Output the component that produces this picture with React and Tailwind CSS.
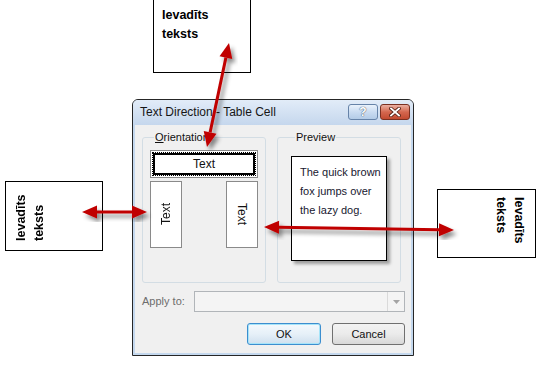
import React from "react";

const ui = { fontFamily: '"Liberation Sans", Arial, sans-serif' };

function Arrow({ x1, y1, x2, y2 }) {
  const len = Math.hypot(x2 - x1, y2 - y1);
  const ux = (x2 - x1) / len;
  const uy = (y2 - y1) / len;
  const px = -uy;
  const py = ux;
  const head = 15;
  const half = 6.5;
  const b1 = [x1 + ux * head, y1 + uy * head];
  const b2 = [x2 - ux * head, y2 - uy * head];
  const tri = (tx, ty, bx, by) =>
    `${tx},${ty} ${bx + px * half},${by + py * half} ${bx - px * half},${by - py * half}`;

  return (
    <g filter="url(#arrowShadow)">
      <line x1={b1[0]} y1={b1[1]} x2={b2[0]} y2={b2[1]} stroke="#c00000" strokeWidth="3" />
      <polygon points={tri(x1, y1, b1[0], b1[1])} fill="#c00000" />
      <polygon points={tri(x2, y2, b2[0], b2[1])} fill="#c00000" />
    </g>
  );
}

function Note({ className, children }) {
  return (
    <div
      className={`absolute border border-black bg-white text-[12.5px] font-bold leading-[18px] text-black ${className}`}
      style={ui}
    >
      {children}
    </div>
  );
}

export default function App() {
  return (
    <div className="relative w-[538px] h-[365px] overflow-hidden bg-white" style={ui}>
      {/* notes around the dialog */}
      <Note className="left-[153px] -top-[1px] w-[98px] h-[74px] pl-[8px] pt-[6px] leading-[19px]">
        <div>Ievadīts</div>
        <div>teksts</div>
      </Note>

      <Note className="left-[5px] top-[181px] w-[98px] h-[70px]">
        <div className="w-full h-full [writing-mode:vertical-rl] rotate-180 pt-[9px] pr-[6px]">
          <div>Ievadīts</div>
          <div>teksts</div>
        </div>
      </Note>

      <Note className="left-[437px] top-[189px] w-[99px] h-[69px]">
        <div className="w-full h-full [writing-mode:vertical-rl] pt-[7px] pr-[7px]">
          <div>Ievadīts</div>
          <div>teksts</div>
        </div>
      </Note>

      {/* dialog */}
      <div className="absolute left-[132px] top-[99px] w-[282px] h-[257px] flex flex-col rounded-t-[6px] border border-[#262626] bg-[#c4d8ee] overflow-hidden">
        <div className="h-[25px] shrink-0 flex items-start pl-[7px] pr-[3px] bg-linear-to-b from-[#e2ecf8] to-[#c5d7ed]">
          <span className="mt-[5px] text-[12px] leading-[14px] text-[#161616]">Text Direction - Table Cell</span>
          <div className="ml-auto mt-[4px] flex gap-[2px]">
            <div className="w-[30px] h-[16px] rounded-[3px] border border-[#6683a8] bg-linear-to-b from-[#eaf2fb] via-[#cadcf1] to-[#b3cbe7] flex items-center justify-center">
              <span
                className="text-[12px] font-bold leading-[12px] text-white"
                style={{ textShadow: "0 0 1px #44546b, 0 0 1px #44546b" }}
              >
                ?
              </span>
            </div>
            <div className="w-[30px] h-[16px] rounded-[3px] border border-[#7a3021] bg-linear-to-b from-[#eab0a2] via-[#d4674f] to-[#c24a30] flex items-center justify-center">
              <svg width="12" height="10" viewBox="0 0 12 10">
                <path d="M2 1.5 L10 8.5 M10 1.5 L2 8.5" stroke="#5b2419" strokeWidth="3.6" strokeLinecap="square" />
                <path d="M2 1.5 L10 8.5 M10 1.5 L2 8.5" stroke="#ffffff" strokeWidth="1.8" strokeLinecap="square" />
              </svg>
            </div>
          </div>
        </div>

        <div className="flex-1 mx-[2px] mb-[2px] bg-[#f0f0f0] pl-[7px] pr-[6px] pt-[5px] flex flex-col text-[11px] text-[#111]">
          <div className="flex gap-[11px]">
            <fieldset className="w-[124px] h-[153px] border border-[#d3dde4] rounded-[3px] pl-[7px]">
              <legend className="ml-[4px] px-[1px] leading-[14px]">
                <span className="underline">O</span>rientation
              </legend>
              <div className="mt-[6px] w-[108px] h-[28px] border border-[#8a8a8a] bg-white p-[1px]">
                <div className="h-full border border-dotted border-black">
                  <div className="h-full border-2 border-black bg-white flex items-center justify-center text-[12px]">
                    Text
                  </div>
                </div>
              </div>
              <div className="mt-[3px] w-[108px] flex justify-between">
                <div className="w-[32px] h-[67px] border border-[#8a8a8a] bg-white flex items-center justify-center text-[12px]">
                  <span className="inline-block [writing-mode:vertical-rl] rotate-180">Text</span>
                </div>
                <div className="w-[32px] h-[67px] border border-[#8a8a8a] bg-white flex items-center justify-center text-[12px]">
                  <span className="inline-block [writing-mode:vertical-rl]">Text</span>
                </div>
              </div>
            </fieldset>

            <fieldset className="w-[124px] h-[153px] border border-[#d3dde4] rounded-[3px] pl-[13px]">
              <legend className="ml-[4px] px-[1px] leading-[14px]">Preview</legend>
              <div className="mt-[12px] w-[96px] h-[105px] border border-black bg-white pt-[6px] pl-[8px] pr-[2px] leading-[19px] text-[#181830] shadow-[3px_3px_3px_rgba(0,0,0,0.35)]">
                The quick brown fox jumps over the lazy dog.
              </div>
            </fieldset>
          </div>

          <div className="mt-[8px] h-[21px] flex items-center">
            <span className="w-[52px] text-[#6d6d6d]">Apply to:</span>
            <div className="flex-1 h-full border border-[#b1b5b9] bg-[#f4f4f4] flex justify-end">
              <div className="w-[17px] h-full border-l border-[#dadada] flex items-center justify-center">
                <svg width="7" height="4" viewBox="0 0 7 4">
                  <path d="M0 0 H7 L3.5 4 Z" fill="#a4a4a4" />
                </svg>
              </div>
            </div>
          </div>

          <div className="mt-[11px] flex justify-end gap-[11px]">
            <div className="w-[74px] h-[22px] rounded-[3px] border border-[#3c8ecf] bg-linear-to-b from-[#f4f9fd] via-[#e6f0f8] to-[#cfe0ee] shadow-[inset_0_0_0_1px_#a6e4f9] flex items-center justify-center">
              OK
            </div>
            <div className="w-[73px] h-[22px] rounded-[3px] border border-[#707070] bg-linear-to-b from-[#f3f3f3] via-[#ebebeb] to-[#d8d8d8] flex items-center justify-center">
              Cancel
            </div>
          </div>
        </div>
      </div>

      {/* arrows */}
      <svg className="absolute inset-0 pointer-events-none" width="538" height="365">
        <defs>
          <filter id="arrowShadow" x="-20%" y="-20%" width="140%" height="140%">
            <feDropShadow dx="3" dy="4" stdDeviation="2" floodColor="#000" floodOpacity="0.45" />
          </filter>
        </defs>
        <Arrow x1={229} y1={43} x2={207} y2={147} />
        <Arrow x1={82} y1={212} x2={147} y2={212} />
        <Arrow x1={264} y1={227} x2={454} y2={230} />
      </svg>
    </div>
  );
}
